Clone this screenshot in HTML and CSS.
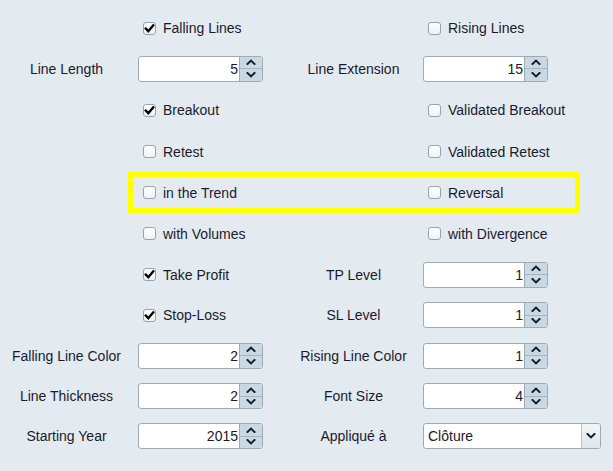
FILE: index.html
```html
<!DOCTYPE html>
<html>
<head>
<meta charset="utf-8">
<link rel="stylesheet" href="styles.css">
</head>
<body>
<div class="panel">
  <div class="form">
    <!-- row 1 -->
    <div class="cell"></div>
    <div class="cell fb"><label class="cb"><span class="box on"><svg viewBox="0 0 13 13"><path d="M2.8 6.6 L5.3 9.2 L10.2 3.4"/></svg></span>Falling Lines</label></div>
    <div class="cell"></div>
    <div class="cell fd"><label class="cb"><span class="box"></span>Rising Lines</label></div>
    <!-- row 2 -->
    <div class="cell lbl">Line Length</div>
    <div class="cell fb"><div class="spin"><span class="val">5</span><span class="btns"><span class="up"><svg viewBox="0 0 10 6"><path d="M1.5 5 L5 1.6 L8.5 5"/></svg></span><span class="dn"><svg viewBox="0 0 10 6"><path d="M1.5 1 L5 4.4 L8.5 1"/></svg></span></span></div></div>
    <div class="cell lbl r">Line Extension</div>
    <div class="cell fd"><div class="spin"><span class="val">15</span><span class="btns"><span class="up"><svg viewBox="0 0 10 6"><path d="M1.5 5 L5 1.6 L8.5 5"/></svg></span><span class="dn"><svg viewBox="0 0 10 6"><path d="M1.5 1 L5 4.4 L8.5 1"/></svg></span></span></div></div>
    <!-- row 3 -->
    <div class="cell"></div>
    <div class="cell fb"><label class="cb"><span class="box on"><svg viewBox="0 0 13 13"><path d="M2.8 6.6 L5.3 9.2 L10.2 3.4"/></svg></span>Breakout</label></div>
    <div class="cell"></div>
    <div class="cell fd"><label class="cb"><span class="box"></span>Validated Breakout</label></div>
    <!-- row 4 -->
    <div class="cell"></div>
    <div class="cell fb"><label class="cb"><span class="box"></span>Retest</label></div>
    <div class="cell"></div>
    <div class="cell fd"><label class="cb"><span class="box"></span>Validated Retest</label></div>
    <!-- row 5 -->
    <div class="cell"></div>
    <div class="cell fb"><label class="cb"><span class="box"></span>in the Trend</label></div>
    <div class="cell"></div>
    <div class="cell fd"><label class="cb"><span class="box"></span>Reversal</label></div>
    <!-- row 6 -->
    <div class="cell"></div>
    <div class="cell fb"><label class="cb"><span class="box"></span>with Volumes</label></div>
    <div class="cell"></div>
    <div class="cell fd"><label class="cb"><span class="box"></span>with Divergence</label></div>
    <!-- row 7 -->
    <div class="cell"></div>
    <div class="cell fb"><label class="cb"><span class="box on"><svg viewBox="0 0 13 13"><path d="M2.8 6.6 L5.3 9.2 L10.2 3.4"/></svg></span>Take Profit</label></div>
    <div class="cell lbl r">TP Level</div>
    <div class="cell fd"><div class="spin"><span class="val">1</span><span class="btns"><span class="up"><svg viewBox="0 0 10 6"><path d="M1.5 5 L5 1.6 L8.5 5"/></svg></span><span class="dn"><svg viewBox="0 0 10 6"><path d="M1.5 1 L5 4.4 L8.5 1"/></svg></span></span></div></div>
    <!-- row 8 -->
    <div class="cell"></div>
    <div class="cell fb"><label class="cb"><span class="box on"><svg viewBox="0 0 13 13"><path d="M2.8 6.6 L5.3 9.2 L10.2 3.4"/></svg></span>Stop-Loss</label></div>
    <div class="cell lbl r">SL Level</div>
    <div class="cell fd"><div class="spin"><span class="val">1</span><span class="btns"><span class="up"><svg viewBox="0 0 10 6"><path d="M1.5 5 L5 1.6 L8.5 5"/></svg></span><span class="dn"><svg viewBox="0 0 10 6"><path d="M1.5 1 L5 4.4 L8.5 1"/></svg></span></span></div></div>
    <!-- row 9 -->
    <div class="cell lbl">Falling Line Color</div>
    <div class="cell fb"><div class="spin"><span class="val">2</span><span class="btns"><span class="up"><svg viewBox="0 0 10 6"><path d="M1.5 5 L5 1.6 L8.5 5"/></svg></span><span class="dn"><svg viewBox="0 0 10 6"><path d="M1.5 1 L5 4.4 L8.5 1"/></svg></span></span></div></div>
    <div class="cell lbl r">Rising Line Color</div>
    <div class="cell fd"><div class="spin"><span class="val">1</span><span class="btns"><span class="up"><svg viewBox="0 0 10 6"><path d="M1.5 5 L5 1.6 L8.5 5"/></svg></span><span class="dn"><svg viewBox="0 0 10 6"><path d="M1.5 1 L5 4.4 L8.5 1"/></svg></span></span></div></div>
    <!-- row 10 -->
    <div class="cell lbl">Line Thickness</div>
    <div class="cell fb"><div class="spin"><span class="val">2</span><span class="btns"><span class="up"><svg viewBox="0 0 10 6"><path d="M1.5 5 L5 1.6 L8.5 5"/></svg></span><span class="dn"><svg viewBox="0 0 10 6"><path d="M1.5 1 L5 4.4 L8.5 1"/></svg></span></span></div></div>
    <div class="cell lbl r">Font Size</div>
    <div class="cell fd"><div class="spin"><span class="val">4</span><span class="btns"><span class="up"><svg viewBox="0 0 10 6"><path d="M1.5 5 L5 1.6 L8.5 5"/></svg></span><span class="dn"><svg viewBox="0 0 10 6"><path d="M1.5 1 L5 4.4 L8.5 1"/></svg></span></span></div></div>
    <!-- row 11 -->
    <div class="cell lbl">Starting Year</div>
    <div class="cell fb"><div class="spin"><span class="val">2015</span><span class="btns"><span class="up"><svg viewBox="0 0 10 6"><path d="M1.5 5 L5 1.6 L8.5 5"/></svg></span><span class="dn"><svg viewBox="0 0 10 6"><path d="M1.5 1 L5 4.4 L8.5 1"/></svg></span></span></div></div>
    <div class="cell lbl r">Appliqué à</div>
    <div class="cell fd"><div class="combo"><span class="ctext">Clôture</span><span class="cbtn"><svg viewBox="0 0 10 6"><path d="M1.5 1 L5 4.4 L8.5 1"/></svg></span></div></div>

    <div class="highlight"></div>
  </div>
</div>
</body>
</html>
```

FILE: styles.css
```css
html, body {
  margin: 0;
  padding: 0;
  background: #e3ebf1;
}
body {
  width: 613px;
  height: 471px;
  overflow: hidden;
  font-family: "Liberation Sans", Arial, sans-serif;
  font-size: 14px;
  color: #1b1a2c;
}
.panel {
  padding-top: 8px;
}
.form {
  position: relative;
  display: grid;
  grid-template-columns: 133px 130px 160px 178px;
  grid-template-rows: 40px 41px 42px 41px 41px 41px 41px 40px 41px 40px 40px;
}
.cell {
  display: flex;
  align-items: center;
  min-width: 0;
}
.lbl {
  justify-content: center;
  white-space: nowrap;
}
.lbl.r {
  padding-left: 21px;
}
.fb {
  padding-left: 5px;
}
.cb {
  display: flex;
  align-items: center;
  padding-left: 5px;
  white-space: nowrap;
  line-height: 16px;
}
.box {
  box-sizing: border-box;
  width: 13px;
  height: 13px;
  border: 1px solid #9aa2a9;
  border-radius: 3px;
  background: linear-gradient(#ffffff, #eef2f5);
  margin-right: 7px;
  display: flex;
  align-items: center;
  justify-content: center;
}
.box svg {
  width: 13px;
  height: 13px;
  flex: none;
}
.box svg path {
  fill: none;
  stroke: #000;
  stroke-width: 2.4;
  stroke-linecap: square;
  stroke-linejoin: miter;
}
.spin {
  box-sizing: border-box;
  width: 125px;
  height: 26px;
  border: 1px solid #a2aab1;
  border-radius: 3px;
  background: #fff;
  display: flex;
  overflow: hidden;
}
.val {
  flex: 1;
  text-align: right;
  padding-right: 1px;
  line-height: 24px;
}
.btns {
  width: 22px;
  border-left: 1px solid #a2aab1;
  display: flex;
  flex-direction: column;
  background: #c9d9e3;
}
.up, .dn {
  flex: 1;
  display: flex;
  align-items: center;
  justify-content: center;
}
.up {
  border-bottom: 1px solid #a7b5bf;
}
.btns svg, .cbtn svg {
  width: 10px;
  height: 6px;
}
.btns path, .cbtn path {
  fill: none;
  stroke: #1a1a28;
  stroke-width: 2;
  stroke-linecap: square;
}
.combo {
  box-sizing: border-box;
  width: 178px;
  height: 26px;
  border: 1px solid #a2aab1;
  border-radius: 3px;
  background: #fff;
  display: flex;
  overflow: hidden;
}
.ctext {
  flex: 1;
  padding-left: 4px;
  line-height: 24px;
}
.cbtn {
  width: 18px;
  border-left: 1px solid #b7c1c8;
  background: linear-gradient(#f2f6f8, #dde7ee);
  display: flex;
  align-items: center;
  justify-content: center;
}
.highlight {
  position: absolute;
  left: 128px;
  top: 164px;
  width: 452px;
  height: 41px;
  box-sizing: border-box;
  border: 5px solid #ffff00;
  pointer-events: none;
}
```
